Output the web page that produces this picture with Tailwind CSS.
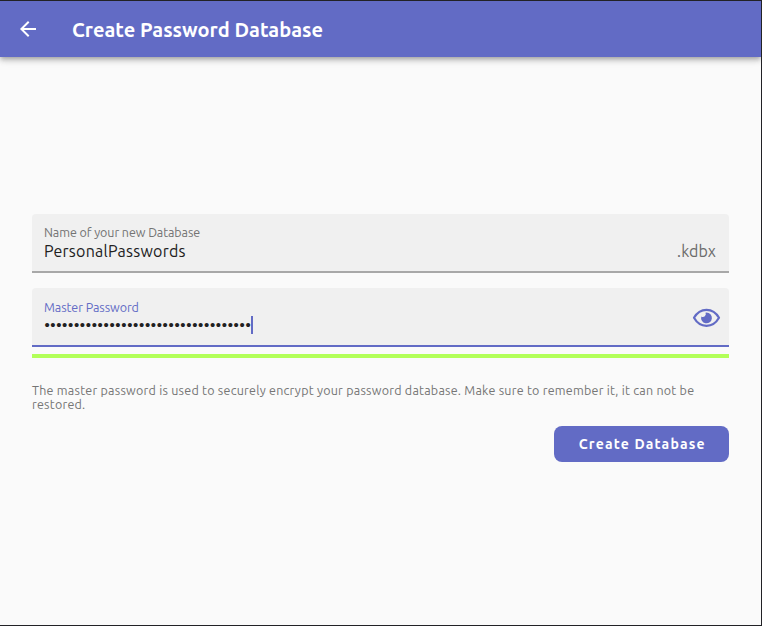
<!DOCTYPE html>
<html lang="en">
<head>
<meta charset="utf-8">
<title>Create Password Database</title>
<script src="https://cdn.jsdelivr.net/npm/@tailwindcss/browser@4"></script>
</head>
<body class="w-[762px] h-[626px] overflow-hidden bg-[#fafafa] font-['Ubuntu','Noto_Sans',sans-serif] border-t border-r border-b border-[#222226] flex flex-col">
<header class="h-14 shrink-0 bg-[#626bc5] text-white flex items-center pl-4 shadow-[0_2px_4px_-1px_rgba(0,0,0,0.2),0_4px_5px_rgba(0,0,0,0.14),0_1px_10px_rgba(0,0,0,0.12)]">
  <button class="size-6 mr-8" aria-label="Back"><svg viewBox="0 0 24 24" class="size-6" fill="currentColor"><path d="M20 11H7.83l5.59-5.59L12 4l-8 8 8 8 1.41-1.41L7.83 13H20v-2z"/></svg></button>
  <h1 class="text-[20px] leading-7 pt-px font-semibold whitespace-nowrap tracking-[0.02px]">Create Password Database</h1>
</header>
<main class="pl-8 pr-8 pt-[157px] flex flex-col">
  <div class="h-[59px] bg-[#f0f0f0] rounded-t border-b-2 border-[#a8a8a8] px-3 pt-[10px]">
    <div class="text-[12.5px] leading-4 mb-px text-[#737373] tracking-[-0.08px]">Name of your new Database</div>
    <div class="flex justify-between text-[16px] leading-5 text-[#212121] tracking-[0.24px]"><span>PersonalPasswords</span><span class="text-[#6b6b6b] mr-px tracking-[0.1px]">.kdbx</span></div>
  </div>
  <div class="mt-[15px] h-[59px] bg-[#f0f0f0] rounded-t border-b-2 border-[#626bc5] pl-3 pr-2 flex justify-between">
    <div class="pt-[11px]">
      <div class="text-[12.5px] leading-4 text-[#626bc5] tracking-[-0.06px]">Master Password</div>
      <div class="flex h-[18px] mt-px items-center text-[#212121]"><span class="w-[207px] pl-[0.4px] text-[15px] leading-[18px] whitespace-nowrap font-['Liberation_Sans',sans-serif] tracking-[0.66px]">•••••••••••••••••••••••••••••••••••</span><span class="w-0.5 h-[18px] bg-[#626bc5]"></span></div>
    </div>
    <svg class="w-[29px] h-[21px] mt-[19px]" viewBox="0 0 29 21" fill="none"><path d="M2 10.8C5 5.5 9.3 2.8 14.5 2.8S24 5.5 27 10.8C24 16.1 19.7 18.8 14.5 18.8S5 16.1 2 10.8Z" stroke="#626bc5" stroke-width="2.2" stroke-linejoin="round"/><path d="M14.5 5.5a5.4 5.4 0 1 1-5.2 3.9 2.9 2.9 0 0 0 4.2-3.7Z" fill="#626bc5"/></svg>
  </div>
  <div class="mt-[7px] h-1 bg-[#b2ff59]"></div>
  <p class="mt-[25px] text-[12.5px] leading-[14px] text-[#757575] tracking-[0.24px]"><span class="whitespace-nowrap">The master password is used to securely encrypt your password database. Make sure to remember it, it can not be</span><br>restored.</p>
  <button class="mt-[15px] pl-[1.5px] self-end w-[175px] h-9 rounded-lg bg-[#626bc5] text-white text-[14px] leading-5 font-semibold tracking-[1.18px]">Create Database</button>
</main>
</body>
</html>
